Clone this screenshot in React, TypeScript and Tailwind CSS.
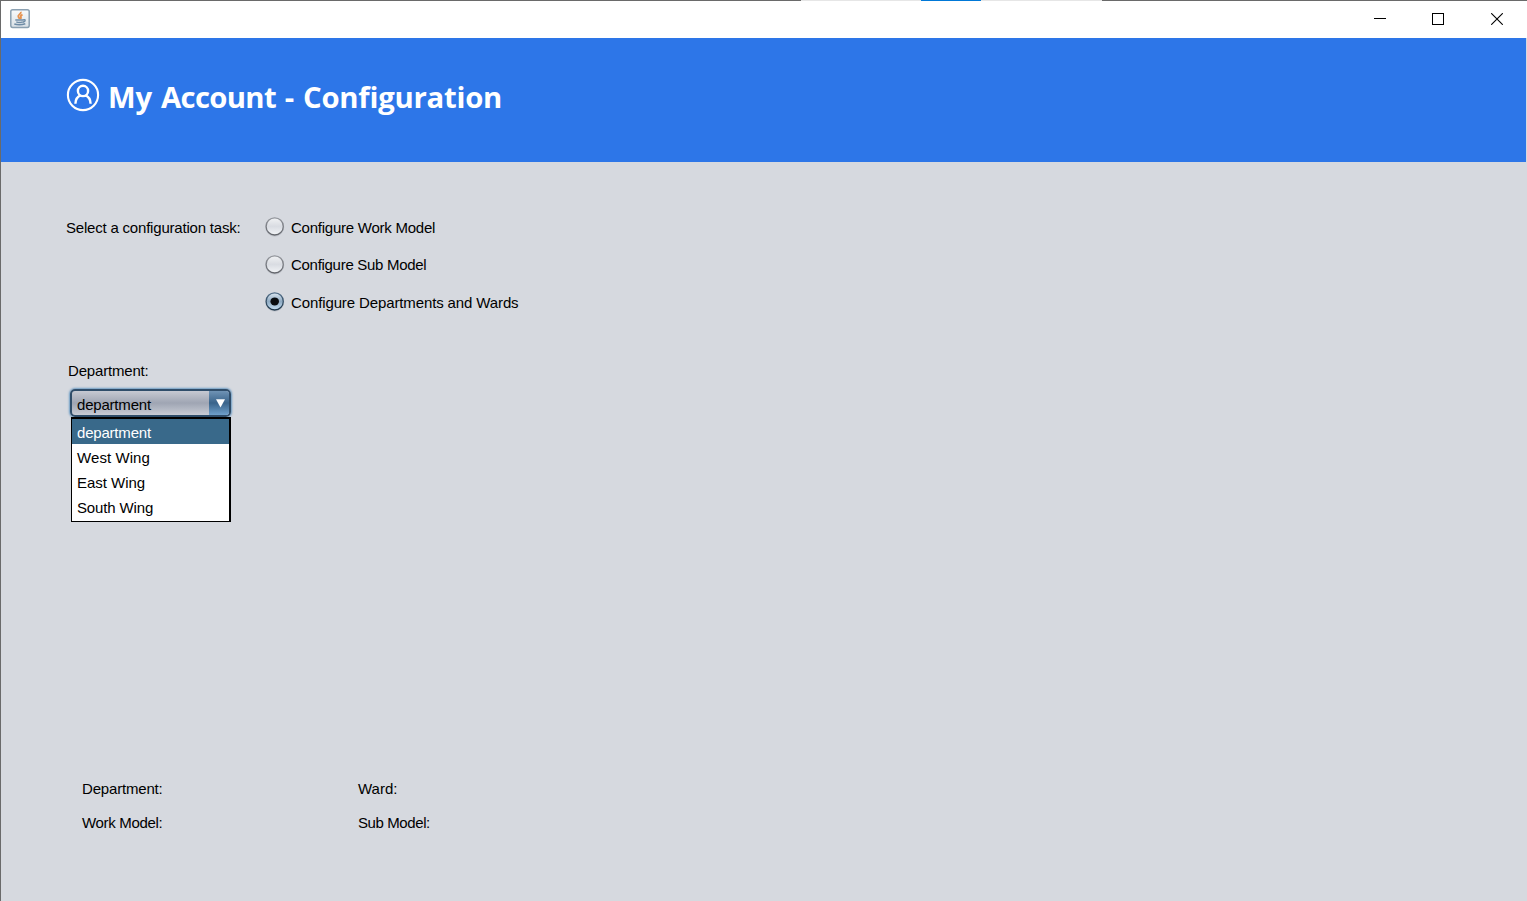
import React from "react";

const tasks = [
  { label: "Configure Work Model", checked: false, row: "h-[37px]", radio: "-mt-px", text: "tracking-[-0.24px]" },
  { label: "Configure Sub Model", checked: false, row: "h-[38px]", radio: "mt-0", text: "tracking-[-0.29px]" },
  { label: "Configure Departments and Wards", checked: true, row: "h-[20px]", radio: "-mt-px", text: "tracking-[-0.12px]" },
];

const options = [
  { label: "department", style: "bg-[#39698a] text-white tracking-[-0.2px]" },
  { label: "West Wing", style: "tracking-[0.08px]" },
  { label: "East Wing", style: "tracking-[-0.03px]" },
  { label: "South Wing", style: "tracking-[-0.14px]" },
];

function JavaIcon() {
  return (
    <svg width="20" height="20" viewBox="0 0 20 20" className="block">
      <defs>
        <linearGradient id="tile" x1="0" y1="0" x2="0" y2="1">
          <stop offset="0" stopColor="#f8fafb" />
          <stop offset="1" stopColor="#d9e0e6" />
        </linearGradient>
      </defs>
      <rect x="0.8" y="0.8" width="18.4" height="17.6" rx="1.8" fill="url(#tile)" stroke="#8ba0b1" strokeWidth="1.5" />
      <path d="M10.9 2.8 C11.5 5 7.4 5.8 8.3 7.6 C8.7 8.6 9.5 9 9.5 10 M12.5 5.6 C9.7 6.8 10.8 7.8 11 8.6 C11.1 9.4 10.4 9.8 10.3 10.2" fill="none" stroke="#e6924f" strokeWidth="1.8" />
      <path d="M5.3 11 H13 M6.3 12.9 Q9.5 14.2 12.6 12.9 M12.8 10.9 Q15.6 10.2 15 11.8 Q14.5 12.8 12.8 13.2 M4.3 15 Q9.5 16.7 15.3 14.7" fill="none" stroke="#6f8ca6" strokeWidth="1.5" />
    </svg>
  );
}

function TitleBar() {
  return (
    <div className="flex h-[38px] shrink-0 flex-col bg-white">
      <div className="flex h-px shrink-0 bg-[#6a6a6a] pl-[800px]">
        <div className="w-[120px] bg-[#e6e6e6]" />
        <div className="w-[60px] bg-[#0078d7]" />
        <div className="w-[121px] bg-[#e6e6e6]" />
      </div>
      <div className="flex items-start justify-between pt-2 pr-[24px] pl-[9px]">
        <JavaIcon />
        <div className="flex pt-1">
          <svg width="12" height="12" viewBox="0 0 12 12" shapeRendering="crispEdges">
            <path d="M0 5.5H12" stroke="#000" />
          </svg>
          <svg width="12" height="12" viewBox="0 0 12 12" shapeRendering="crispEdges" className="ml-[46px]">
            <path d="M.5 .5H11.5V11.5H.5Z" fill="none" stroke="#000" />
          </svg>
          <svg width="12" height="12" viewBox="0 0 12 12" className="ml-[47px]">
            <path d="M.2 .2L11.8 11.8M11.8 .2L.2 11.8" stroke="#000" strokeWidth="1.1" />
          </svg>
        </div>
      </div>
    </div>
  );
}

function Radio({ checked, className }: { checked: boolean; className: string }) {
  return (
    <svg width="21" height="20" viewBox="0 0 21 20" className={`block shrink-0 ${className}`}>
      <defs>
        <linearGradient id="off" x1="0" y1="0" x2="0" y2="1">
          <stop offset="0" stopColor="#f1f2f4" />
          <stop offset="0.5" stopColor="#d9dce2" />
          <stop offset="1" stopColor="#f2f4f7" />
        </linearGradient>
        <linearGradient id="on" x1="0" y1="0" x2="0" y2="1">
          <stop offset="0" stopColor="#dce8f2" />
          <stop offset="0.5" stopColor="#8faac2" />
          <stop offset="1" stopColor="#c4dff3" />
        </linearGradient>
        <linearGradient id="offRing" x1="0" y1="0" x2="0" y2="1">
          <stop offset="0" stopColor="#94979d" />
          <stop offset="1" stopColor="#62656b" />
        </linearGradient>
        <linearGradient id="onRing" x1="0" y1="0" x2="0" y2="1">
          <stop offset="0" stopColor="#54708a" />
          <stop offset="1" stopColor="#1d3549" />
        </linearGradient>
      </defs>
      <circle cx="10.7" cy="10.2" r="9" fill="none" stroke="#c0c4cc" />
      <circle cx="10.7" cy="9.4" r="8.6" fill={checked ? "url(#on)" : "url(#off)"} stroke={checked ? "url(#onRing)" : "url(#offRing)"} strokeWidth="1.3" />
      {checked && <ellipse cx="10.7" cy="9.4" rx="4.3" ry="4" fill="#090d11" />}
    </svg>
  );
}

function Header() {
  return (
    <header className="mr-px flex h-[124px] shrink-0 items-start bg-[#2d76e8] pt-[37px] pl-[65px]">
      <svg width="34" height="40" viewBox="0 0 34 40" fill="none" stroke="#fff" className="shrink-0">
        <circle cx="17" cy="20" r="15.1" strokeWidth="2.1" />
        <ellipse cx="17" cy="15.9" rx="5.1" ry="5.2" strokeWidth="2.4" />
        <path d="M9.4 28.8C9.5 24.6 11.4 21.6 14.6 20.4M24.6 28.8C24.5 24.6 22.6 21.6 19.4 20.4" strokeWidth="2.4" />
      </svg>
      <h1 className="ml-2 font-['Open_Sans','Noto_Sans',sans-serif] text-[29.3px] leading-[44px] font-bold whitespace-nowrap text-white [word-spacing:1.2px]">
        My <span className="tracking-[-0.7px]">Account</span> - <span className="tracking-[-0.24px]">Configuration</span>
      </h1>
    </header>
  );
}

function DepartmentSelect() {
  return (
    <div className="w-[161px]">
      <div className="flex h-[28px] overflow-hidden rounded-[5px] border-2 border-[#2f4d6a] bg-linear-to-b from-[#c6c9d2] via-[#9fa5b3] to-[#c8ccd5] shadow-[0_0_2px_1px_#6d9cc4]">
        <span className="flex-1 pt-[4px] pl-[5px] tracking-[-0.2px]">department</span>
        <span className="flex w-[20px] bg-linear-to-b from-[#6f93b5] via-[#3a648b] to-[#6fa0cb] pt-[8px] pl-[7px]">
          <svg width="9" height="9" viewBox="0 0 9 9">
            <path d="M0 .3H9L4.5 8.5Z" fill="#fff" />
          </svg>
        </span>
      </div>
      <ul className="relative ml-px w-[160px] border border-t-2 border-r-2 border-black bg-white pb-[2px]">
        {options.map((o) => (
          <li key={o.label} className={`h-[25px] pt-[4px] pl-[5px] ${o.style}`}>
            {o.label}
          </li>
        ))}
      </ul>
    </div>
  );
}

export default function App() {
  return (
    <div className="flex h-[901px] w-full flex-col overflow-hidden border-l border-[#6a6a6a] bg-[#d6d9df] font-['Liberation_Sans',Arial,sans-serif] text-[15px] leading-[20px] text-black">
      <TitleBar />
      <Header />
      <main className="flex flex-1 flex-col pt-[56px]">
        <div className="flex h-[95px] pl-[65px]">
          <span className="w-[198px] tracking-[-0.2px] whitespace-nowrap">Select a configuration task:</span>
          <div>
            {tasks.map((t) => (
              <label key={t.label} className={`flex items-start gap-[6px] ${t.row}`}>
                <Radio checked={t.checked} className={t.radio} />
                <span className={`whitespace-nowrap ${t.text}`}>{t.label}</span>
              </label>
            ))}
          </div>
        </div>
        <section className="mt-[48px] h-[418px] pl-[67px]">
          <div className="mb-[8px] tracking-[-0.18px]">Department:</div>
          <div className="pl-[2px]">
            <DepartmentSelect />
          </div>
        </section>
        <section className="grid grid-cols-[276px_1fr] gap-y-[14px] pl-[81px]">
          <span className="tracking-[-0.18px]">Department:</span>
          <span>Ward:</span>
          <span className="tracking-[-0.32px]">Work Model:</span>
          <span className="tracking-[-0.4px]">Sub Model:</span>
        </section>
      </main>
    </div>
  );
}
